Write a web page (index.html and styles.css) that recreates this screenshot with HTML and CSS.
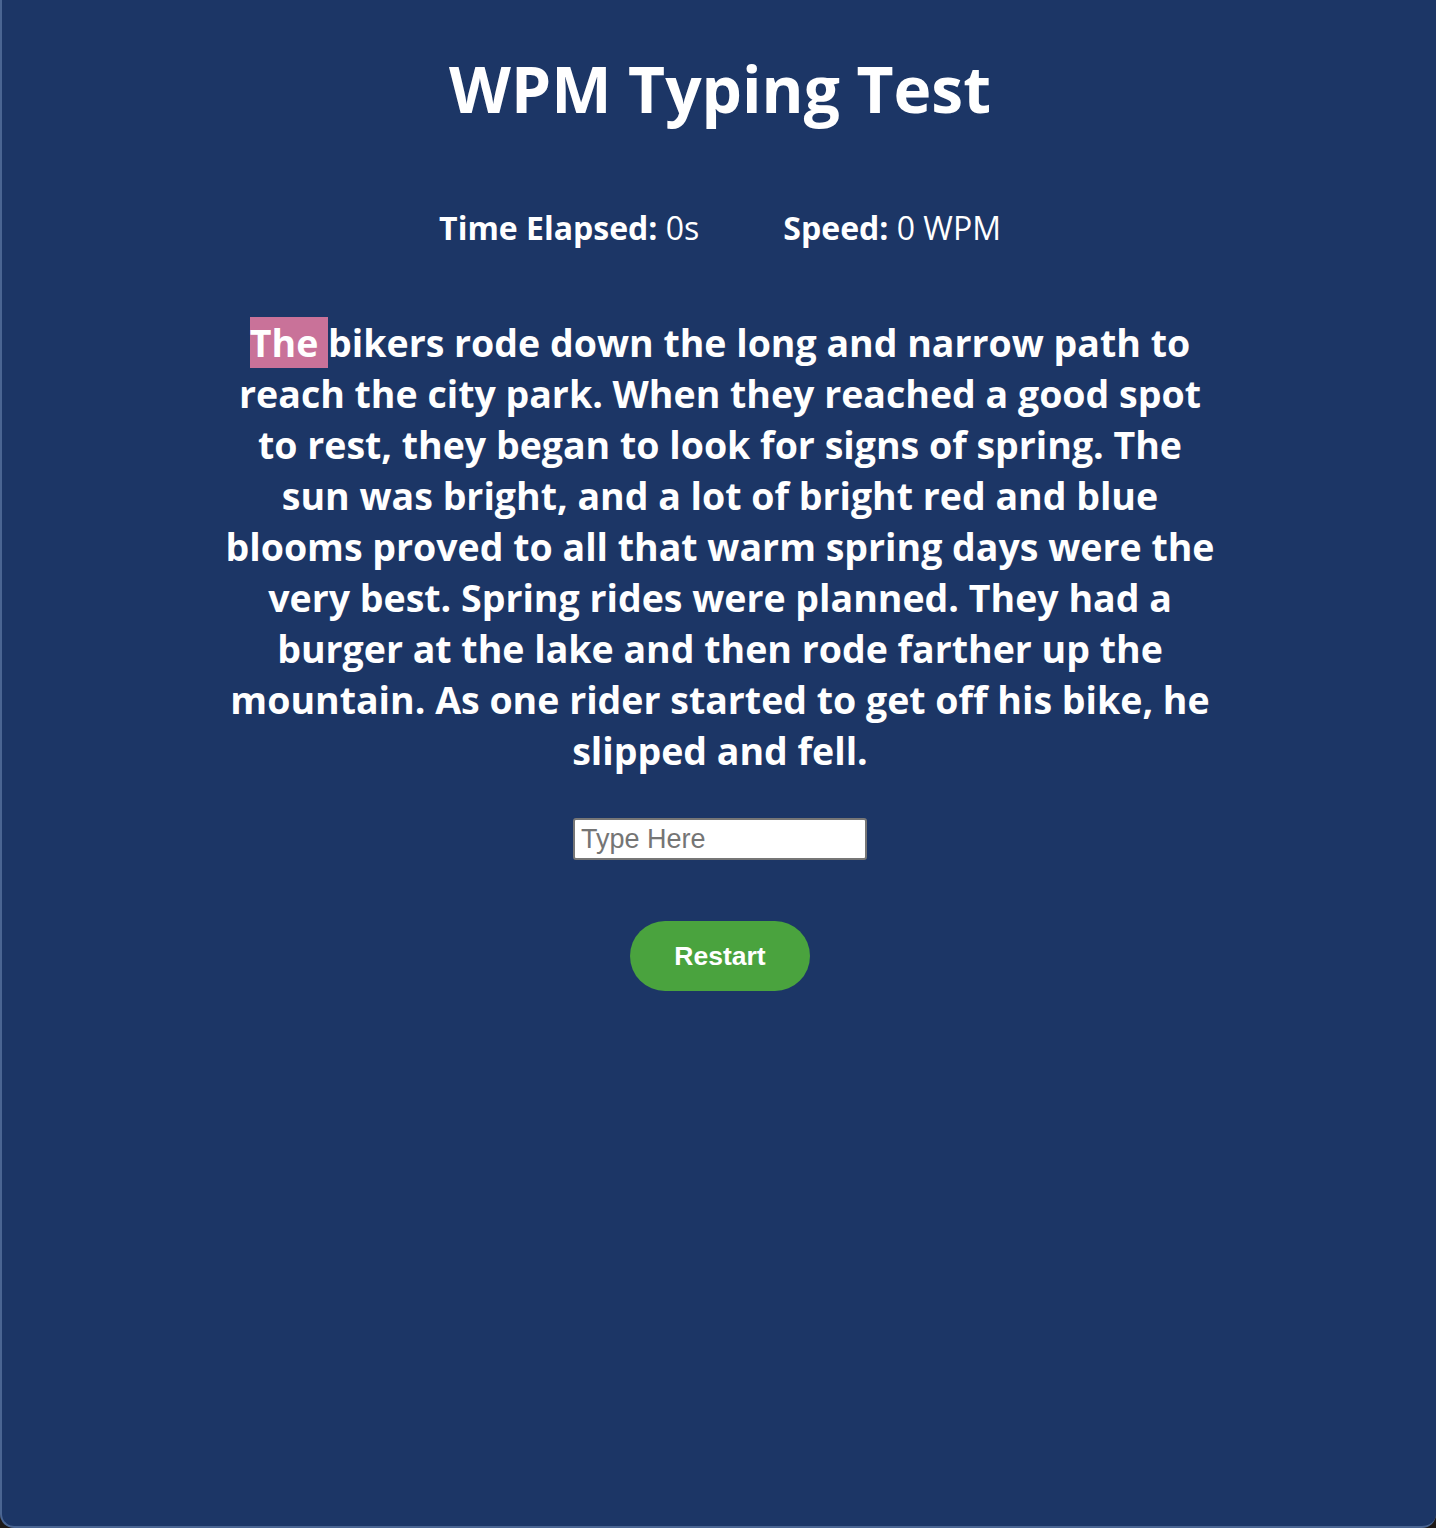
FILE: index.html
```html
<!DOCTYPE html>
<html>
<head>
<meta charset="utf-8">
<link rel="stylesheet" href="styles.css">
<title>WPM Typing Test</title>
</head>
<body>
<div class="window">
  <main class="app">
    <h1 class="title">WPM Typing Test</h1>
    <div class="stats">
      <div class="stat"><span class="label">Time Elapsed:</span> <span class="value">0s</span></div>
      <div class="stat"><span class="label">Speed:</span> <span class="value">0 WPM</span></div>
    </div>
    <p class="passage"><span class="current">The </span>bikers rode down the long and narrow path to reach the city park. When they reached a good spot to rest, they began to look for signs of spring. The sun was bright, and a lot of bright red and blue blooms proved to all that warm spring days were the very best. Spring rides were planned. They had a burger at the lake and then rode farther up the mountain. As one rider started to get off his bike, he slipped and fell.</p>
    <input class="typing" type="text" placeholder="Type Here">
    <button class="restart" type="button">Restart</button>
  </main>
</div>
</body>
</html>
```

FILE: styles.css
```css
html, body {
  margin: 0;
  padding: 0;
  height: 100%;
}
body {
  background: #1e1a18;
}
.window {
  box-sizing: border-box;
  height: 1528px;
  background: #1c3666;
  border-left: 2px solid #4a6592;
  border-bottom: 2px solid #4a6592;
  border-radius: 0 0 14px 14px;
  overflow: hidden;
}
.app {
  display: flex;
  flex-direction: column;
  align-items: center;
  padding-left: 2px;
  color: #ffffff;
  font-family: "Open Sans", sans-serif;
  text-align: center;
}
.title {
  margin: 45px 0 0;
  font-size: 64px;
  font-weight: 700;
  line-height: 87px;
}
.stats {
  display: flex;
  gap: 84px;
  margin-top: 74px;
  font-size: 32px;
  line-height: 44px;
}
.label {
  font-weight: 700;
}
.value {
  font-weight: 400;
}
.passage {
  width: 1000px;
  margin: 67px 0 0;
  font-size: 37.5px;
  font-weight: 700;
  line-height: 51px;
}
.current {
  background: #c97299;
}
.typing {
  box-sizing: border-box;
  width: 294px;
  height: 42px;
  margin-top: 42px;
  padding: 0 6px;
  border: 2px solid #767676;
  border-radius: 3px;
  font-family: "Liberation Sans", Arial, sans-serif;
  font-size: 27px;
  color: #000;
  background: #fff;
}
.typing::placeholder {
  color: #757575;
}
.restart {
  margin-top: 61px;
  width: 180px;
  height: 70px;
  border: none;
  border-radius: 35px;
  background: #4aa33e;
  color: #ffffff;
  font-family: "Liberation Sans", Arial, sans-serif;
  font-size: 26.5px;
  font-weight: 700;
}
```
